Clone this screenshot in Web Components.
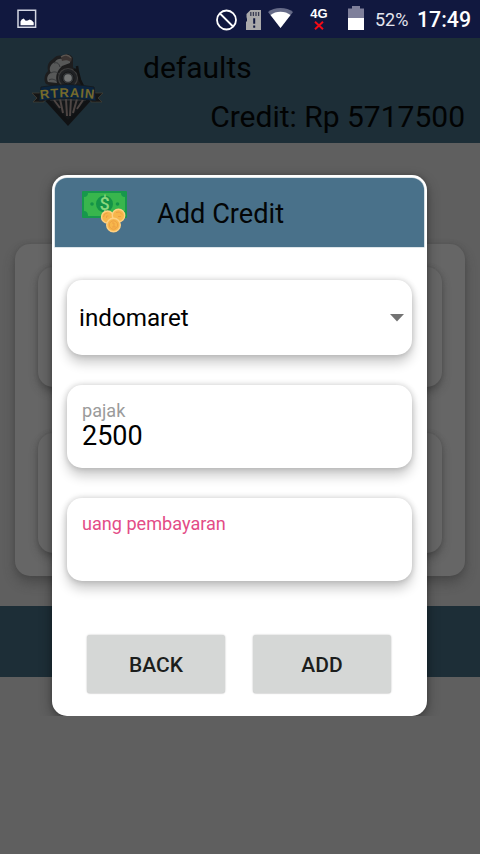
<!DOCTYPE html>
<html lang="id">
<head>
<meta charset="utf-8">
<title>Add Credit</title>
<style>
html,body{margin:0;height:100%;overflow:hidden;background:#5f5f5f;font-family:Roboto,"Liberation Sans",sans-serif;color:#000}
</style>
</head>
<body>
<credit-app></credit-app>
<script>
const define = (name, markup) => {
  const t = document.createElement('template');
  t.innerHTML = markup;
  customElements.define(name, class extends HTMLElement {
    constructor() {
      super();
      this.attachShadow({mode: 'open'}).appendChild(t.content.cloneNode(true));
    }
  });
};

define('status-bar', `<style>
:host{display:flex;align-items:center;height:38px;background:#11183f;color:#fff;flex:none}
svg{display:block;flex:none}
.pct{font-size:18px;line-height:38px;margin-left:11px;width:42px;color:#e4e5ee;padding-top:2px;white-space:nowrap}
.time{font-size:21.3px;line-height:38px;font-weight:500;padding-top:2px;white-space:nowrap}
.net{width:22px;margin-left:14px;display:flex;flex-direction:column;align-items:center;font:bold 13px/13px "Liberation Sans",sans-serif;margin-top:-2px}
.net svg{margin-top:1px}
</style>
<svg width="20" height="20" viewBox="0 0 20 20" style="margin-left:17px"><path d="M1 1.3h17.6v17H1z" fill="none" stroke="#d3d6e3" stroke-width="1.5"/><path d="M3.5 16.2v-3.8l1.2-2 2-.8 2 2.2 2-.3 2-1 2.2 1 1.8 2v2.7z" fill="#fff"/></svg>
<svg width="22" height="22" viewBox="0 0 22 22" style="margin-left:179px;margin-top:1px"><circle cx="10.5" cy="11" r="9.5" fill="none" stroke="#fff" stroke-width="1.8"/><path d="M4 4.5 17 17.5" stroke="#fff" stroke-width="1.8"/></svg>
<svg width="16" height="20" viewBox="0 0 16 20" style="margin-left:8px;margin-top:2px"><path d="M4.500 0H15v20H0v-8l1-1V9L.5 7V4z" fill="#aaa9aa"/><path d="M4.800 2v4M7.400 2v4M10 2v4M12.600 2v4" stroke="#383b50" stroke-width="1.3"/><path d="M8.200 8.300v5.500M8.200 15.500v2.200" stroke="#11183f" stroke-width="2"/></svg>
<svg width="27" height="22" viewBox="0 0 27 22" style="margin-left:5px;margin-top:-2px"><path d="M1 5C7-.2 20-.2 26 5L13.5 21z" fill="#666b88"/><path d="M3.5 8C8.5 3.5 18.5 3.5 23.5 8l-10 13z" fill="#fff"/></svg>
<div class="net"><span>4G</span><svg width="10" height="9" viewBox="0 0 10 9"><path d="M1 .8 9 8.2M9 .8 1 8.2" stroke="#f40b16" stroke-width="2"/></svg></div>
<svg width="16" height="24" viewBox="0 0 16 24" style="margin-left:18px;margin-top:-2px"><path d="M4 0h8v2.5h4V12H0V2.5h4z" fill="#7e7f9a"/><path d="M0 12h16v12H0z" fill="#fff"/></svg>
<span class="pct">52%</span><span class="time">17:49</span>`);

define('train-logo', `<style>:host{display:block;width:72px;height:74px}svg{display:block}text{font:bold 13px "Liberation Sans",sans-serif;letter-spacing:.9px}</style>
<svg width="72" height="74" viewBox="0 0 72 74">
<path d="M14 31c-3-5-1-10 2-13-1-5 0-9 5-12 3-4 7-4 10-3 3-3 8-2 10 2v9l7 10 3 9H20z" fill="#1d1d1e"/>
<path d="M16 29c-2-4 0-8 3-9-3-5 0-9 4-11 2-4 7-4 9-2 3-2 7 0 6 3l-8 3c-5 5-7 10-5 17z" fill="#575858"/>
<path d="M19 20c3-2 6-1 8 1M22 10c4-1 5 1 6 4M17 27c3-2 6 0 8 1" fill="none" stroke="#343638" stroke-width="1"/>
<path d="M29 4c4-4 9-2 11 1l-1 4c-3-2-6-2-9-1z" fill="#3b3432"/><path d="M29 4c4-3 8-2 10 1" stroke="#5b5550" fill="none" stroke-width="1.3"/>
<circle cx="36" cy="25" r="9.5" fill="#202225" stroke="#3d3d3d" stroke-width="1.2"/><circle cx="36" cy="25" r="6" fill="#303336" stroke="#151617"/><circle cx="36" cy="25" r="3.8" fill="#747676"/>
<path d="M42 16l4 3 2 8 3 6M45 13l1 7" stroke="#121314" stroke-width="2.5" fill="none"/>
<path d="M13 47 36 72l23-25z" fill="#141719" stroke="#393c3e"/>
<path d="M22 47l6 8M28 46l3 14M34 46l1 17M39 46l-1 17M45 46l-4 14M51 47l-6 9" stroke="#4d4543" stroke-width="2"/>
<path d="M15 47 36 70l21-23" fill="none" stroke="#101214" stroke-width="4"/>
<path d="M0 40h12v9H1l4-4zm71 0H59v9h11l-4-4z" fill="#141516" stroke="#464035" stroke-width=".7"/>
<path d="M9 34q27-5 53 0l2 14q-28-5-57 0z" fill="#0b243e" stroke="#15191c" stroke-width=".8"/>
<path id="arc" d="M8.500 46.300q27-4.500 60 .5" fill="none"/>
<text fill="#766a2c"><textPath href="#arc">RTRAIN</textPath></text>
</svg>`);

define('account-header', `<style>
:host{display:flex;height:105px;background:#1d2e37;flex:none;font-size:30px;line-height:36px;color:#020303}
train-logo{margin:15px 0 0 32px}
.info{flex:1;padding:12px 15px 0 39px;display:flex;flex-direction:column;gap:13px}
.credit{align-self:flex-end;white-space:nowrap}
</style><train-logo></train-logo><div class="info"><span><slot name="name"></slot></span><span class="credit"><slot name="credit"></slot></span></div>`);

define('menu-panel', `<style>
:host{display:flex;flex-direction:column;gap:46px;box-sizing:border-box;margin:101px 15px 0;padding:23px 23px 23px;height:332px;border-radius:15px;background:#666;box-shadow:0 7px 12px #3337,0 0 4px #4446;flex:none}
i{display:block;height:120px;border-radius:15px;background:#666;box-shadow:0 5px 9px #3337,0 0 4px #4446}
</style><i></i><i></i>`);

define('money-icon', `<style>:host{display:block;width:46px;height:42px}svg{display:block}text{font:500 18px Roboto,sans-serif}</style>
<svg width="46" height="42" viewBox="0 0 46 42">
<rect x="0" y="0" width="45" height="27" rx="1" fill="#17974c"/>
<path d="M6 2h33q0 4 4 4v14q-4 0-4 5H6q0-5-4-5V6q4 0 4-4z" fill="#38b64d"/>
<circle cx="22.5" cy="13" r="8.5" fill="#149347"/><circle cx="10" cy="13" r="1.8" fill="#149347"/><circle cx="35.5" cy="13" r="1.8" fill="#149347"/>
<text x="22.5" y="19.3" text-anchor="middle" fill="#8bd77d">$</text>
<g fill="#f7b64b" stroke="#ffd082" stroke-width="1.4"><circle cx="25.5" cy="26" r="6"/><circle cx="36.5" cy="24.5" r="6.2"/><circle cx="31.5" cy="34" r="6.8"/></g>
<g fill="none" stroke="#eda044" stroke-width="1"><path d="M21.5 26q0-4 4-4M24.5 27v-2h2M34 21.500q4-2 6 2M36 25.500h3"/><circle cx="31.5" cy="34" r="4.2"/><path d="M30 32h2v4m-2 0h4"/></g>
</svg>`);

define('dialog-title', `<style>
:host{display:flex;align-items:center;height:68.5px;margin:3px 3px 0 3px;background:#49718a;border-radius:12px 12px 0 0;box-shadow:0 0 0 .6px #bccbd4;flex:none;font-size:27.2px;color:#030506}
money-icon{margin:0 29px 0 27px}span{line-height:36px;padding-top:4px}
</style><money-icon></money-icon><span><slot></slot></span>`);

define('select-card', `<style>
:host{display:flex;box-sizing:border-box;height:75px;align-items:center;justify-content:space-between;padding:1px 8px 0 12px;border-radius:15px;background:#fff;box-shadow:0 8px 12px #0003,0 0 6px #0003;font-size:24.2px;line-height:32px}
</style><slot></slot><svg width="14" height="8" viewBox="0 0 14 8"><path d="M0 0h14L7 7.5z" fill="#737373"/></svg>`);

define('text-card', `<style>
:host{display:block;box-sizing:border-box;height:83px;padding:15px 15px 0;border-radius:15px;background:#fff;box-shadow:0 8px 12px #0003,0 0 6px #0003}
.l{font-size:18.1px;line-height:22px;color:var(--label,#9b9b9b)}
.v{font-size:27px;line-height:28px}
</style><div class="l"><slot name="label"></slot></div><div class="v"><slot></slot></div>`);

define('action-button', `<style>
:host{display:flex;align-items:center;justify-content:center;width:138px;height:58px;border-radius:3px;background:#d5d7d6;box-shadow:0 0 2px #0004,0 1px 1px #0001;font-size:21px;font-weight:500;color:#1c1e1d}
span{padding-top:2px}
</style><span><slot></slot></span>`);

define('credit-dialog', `<style>
:host{position:absolute;left:52px;top:175px;width:375px;height:541px;border-radius:15px;display:flex;flex-direction:column;background:#fff;box-shadow:0 5px 14px #0005,0 0 5px #0003;clip-path:inset(-20px -20px 0 -20px)}
.fields{display:flex;flex-direction:column;gap:30px;padding:33.5px 15px 0}
.actions{display:flex;gap:28px;padding:54px 0 0 35px}
</style><dialog-title><slot name="title"></slot></dialog-title><div class="fields"><slot></slot></div><div class="actions"><slot name="actions"></slot></div>`);

define('credit-app', `<style>
:host{position:relative;display:flex;flex-direction:column;width:480px;height:854px;background:#5f5f5f;overflow:hidden}
.bar{height:71px;background:#1d2e37;margin-top:30px;flex:none}
.warn{--label:#e34c87}
</style>
<status-bar></status-bar>
<account-header><span slot="name">defaults</span><span slot="credit">Credit: Rp 5717500</span></account-header>
<menu-panel></menu-panel>
<div class="bar"></div>
<credit-dialog>
<span slot="title">Add Credit</span>
<select-card>indomaret</select-card>
<text-card><span slot="label">pajak</span>2500</text-card>
<text-card class="warn"><span slot="label">uang pembayaran</span></text-card>
<action-button slot="actions">BACK</action-button><action-button slot="actions">ADD</action-button>
</credit-dialog>`);
</script>
</body>
</html>
